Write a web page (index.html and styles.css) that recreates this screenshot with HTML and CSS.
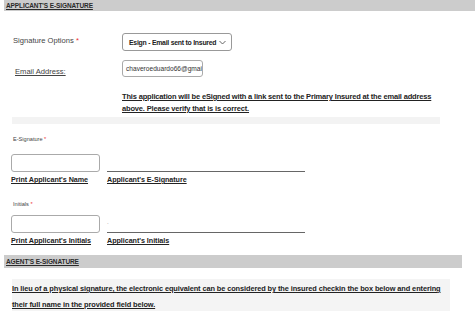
FILE: index.html
```html
<!DOCTYPE html>
<html>
<head>
<meta charset="utf-8">
<link rel="stylesheet" href="styles.css">
</head>
<body>
<div class="page">
  <div class="bar bar-top"><span>APPLICANT'S E-SIGNATURE</span></div>

  <div class="row row-options">
    <div class="label">Signature Options <span class="req">*</span></div>
    <div class="select">
      <span>Esign - Email sent to Insured</span>
      <svg class="chev" width="7" height="5" viewBox="0 0 7 5"><path d="M0.5 1 L3.5 4 L6.5 1" fill="none" stroke="#555" stroke-width="0.9"/></svg>
    </div>
  </div>

  <div class="row row-email">
    <div class="label label-u">Email Address:</div>
    <div class="input input-email">chaveroeduardo66@gmai</div>
  </div>

  <p class="notice">This application will be eSigned with a link sent to the Primary Insured at the email address<br>above. Please verify that is is correct.</p>

  <div class="band"></div>

  <div class="small-label">E-Signature <span class="req">*</span></div>
  <div class="sig-row">
    <div class="input input-sig"></div>
    <div class="sig-line"></div>
  </div>
  <div class="captions">
    <span class="cap cap-left">Print Applicant's Name</span>
    <span class="cap">Applicant's E-Signature</span>
  </div>

  <div class="small-label small-label-2">Initials <span class="req">*</span></div>
  <div class="sig-row sig-row-2">
    <div class="input input-sig"></div>
    <div class="sig-line"><span class="dot">.</span></div>
  </div>
  <div class="captions">
    <span class="cap cap-left">Print Applicant's Initials</span>
    <span class="cap">Applicant's Initials</span>
  </div>

  <div class="bar bar-agent"><span>AGENT'S E-SIGNATURE</span></div>

  <div class="agent-box">
    <p>In lieu of a physical signature, the electronic equivalent can be considered by the insured checkin the box below and entering<br>their full name in the provided field below.</p>
  </div>
</div>
</body>
</html>
```

FILE: styles.css
```css
* { box-sizing: border-box; }
html, body { margin: 0; padding: 0; background: #fff; }
body {
  font-family: "Liberation Sans", Arial, sans-serif;
  color: #333;
  width: 475px;
  height: 316px;
  overflow: hidden;
}
.page { display: flex; flex-direction: column; }

.bar {
  margin-left: 4px;
  width: 458px;
  height: 11px;
  background: #cccccc;
  padding-left: 2px;
  display: flex;
  align-items: center;
}
.bar span {
  font-size: 6.5px;
  font-weight: bold;
  text-decoration: underline;
  color: #2a2a2a;
  letter-spacing: -0.1px;
}
.bar-top { width: 471px; }
.bar-agent { margin-top: 9px; height: 13px; }

.row { display: flex; align-items: center; padding-left: 13px; }
.row-options { margin-top: 22px; height: 18px; }
.row-email { margin-top: 9px; height: 17px; }

.label {
  width: 109px;
  font-size: 7.6px;
  color: #444;
  margin-top: -4px;
}
.label-u { text-decoration: underline; padding-left: 2px; margin-top: 5px; }
.req { color: #e33; }

.select {
  width: 110px;
  height: 18px;
  border: 1px solid #999;
  border-radius: 3px;
  display: flex;
  align-items: center;
  justify-content: space-between;
  padding: 0 5px 0 6px;
  font-size: 6.9px;
  letter-spacing: -0.25px;
  font-weight: bold;
  color: #222;
  white-space: nowrap;
}
.chev { display: block; margin-top: 1px; flex: none; }

.input {
  border: 1px solid #aaa;
  border-radius: 3px;
  background: #fff;
}
.input-email {
  width: 81px;
  height: 17px;
  font-size: 6.6px;
  color: #333;
  padding-left: 3px;
  display: flex;
  align-items: center;
  overflow: hidden;
  white-space: nowrap;
}

.notice {
  margin: 14px 0 0 122px;
  font-size: 7.5px;
  letter-spacing: -0.17px;
  line-height: 12px;
  font-weight: bold;
  text-decoration: underline;
  color: #222;
  white-space: nowrap;
}

.band {
  margin: 2px 0 0 12px;
  width: 428px;
  height: 7px;
  background: #f3f3f3;
}

.small-label {
  margin: 12px 0 0 13px;
  font-size: 5.6px;
  color: #444;
  height: 8px;
}
.small-label-2 { margin-top: 16px; }

.sig-row {
  display: flex;
  align-items: flex-end;
  padding-left: 11px;
  margin-top: 10px;
}
.sig-row-2 { margin-top: 6px; }
.input-sig { width: 89px; height: 18px; }
.sig-line {
  margin-left: 7px;
  width: 198px;
  border-bottom: 1.5px solid #666;
  height: 12px;
  position: relative;
}
.dot { position: absolute; left: 0; top: -2px; font-size: 6px; color: #888; }

.captions {
  display: flex;
  padding-left: 11px;
  margin-top: 3px;
  height: 10px;
}
.cap {
  font-size: 7.2px;
  letter-spacing: -0.05px;
  font-weight: bold;
  text-decoration: underline;
  color: #222;
  white-space: nowrap;
}
.cap-left { width: 96px; }

.agent-box {
  margin: 11px 0 0 12px;
  width: 438px;
  height: 32px;
  background: #f4f4f4;
  padding: 2px 0 0 0;
}
.agent-box p {
  margin: 0;
  font-size: 7.4px;
  letter-spacing: -0.1px;
  line-height: 16px;
  font-weight: bold;
  text-decoration: underline;
  color: #222;
  white-space: nowrap;
}
```
